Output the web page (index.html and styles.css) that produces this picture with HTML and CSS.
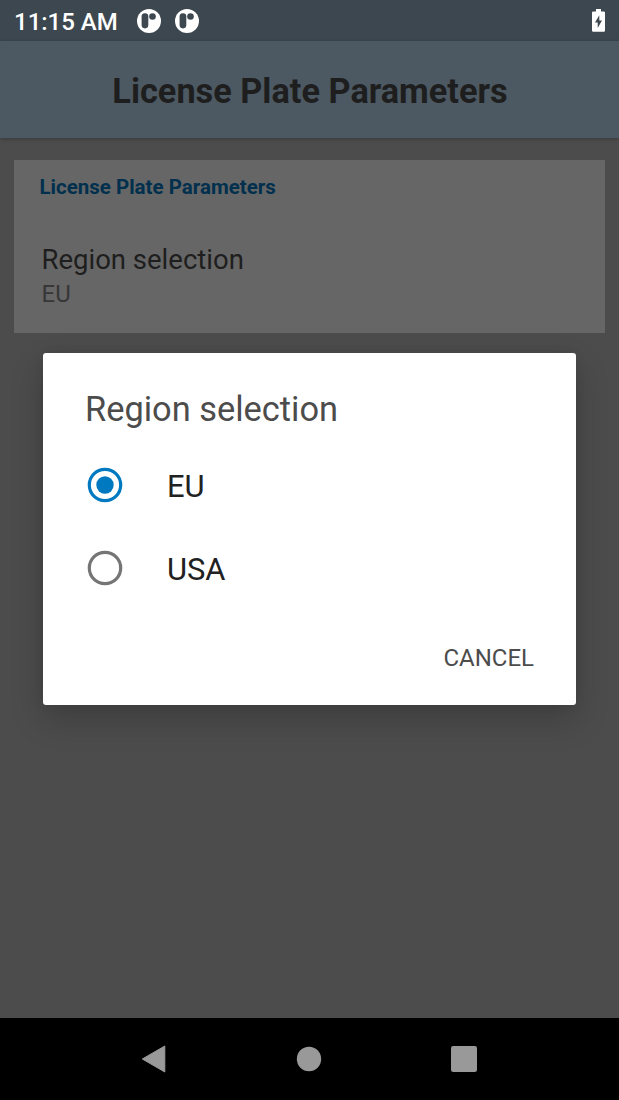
FILE: index.html
```html
<!DOCTYPE html>
<html lang="en">
<head>
<meta charset="utf-8">
<title>License Plate Parameters</title>
<link rel="stylesheet" href="styles.css">
</head>
<body>
<div class="screen">
  <div class="status-bar">
    <span class="clock">11:15 AM</span>
    <svg class="notice" width="24" height="24" viewBox="0 0 24 24"><circle cx="12" cy="12" r="12" fill="#fff"/><rect x="4.600" y="4.200" width="6.700" height="15.200" rx="3.300" fill="#3d474f"/><circle cx="15.500" cy="7.500" r="3.300" fill="#3d474f"/></svg>
    <svg class="notice" width="24" height="24" viewBox="0 0 24 24"><circle cx="12" cy="12" r="12" fill="#fff"/><rect x="4.600" y="4.200" width="6.700" height="15.200" rx="3.300" fill="#3d474f"/><circle cx="15.500" cy="7.500" r="3.300" fill="#3d474f"/></svg>
    <svg class="battery" width="13" height="23" viewBox="0 0 13 23"><path d="M4 0h5v2.400h2.800q1.200 0 1.200 1.200v18q0 1.200-1.200 1.200H1.200Q0 22.800 0 21.600v-18Q0 2.400 1.200 2.400H4z" fill="#fff"/><path d="M7.300 6.200v5.300h2.700L5.700 19v-5.600H3z" fill="#3d474f"/></svg>
  </div>
  <header class="app-bar"><h1 class="app-title">License Plate Parameters</h1></header>
  <main class="content">
    <section class="card">
      <h2 class="card-heading">License Plate Parameters</h2>
      <div class="pref-title">Region selection</div>
      <div class="pref-value">EU</div>
    </section>
  </main>
  <nav class="nav-bar">
    <svg class="nav-icon" width="30" height="30" viewBox="0 0 30 30"><path d="M2.300 15 24.800 2v26z" fill="#999" stroke="#999" stroke-linejoin="round"/></svg>
    <svg class="nav-icon" width="30" height="30" viewBox="0 0 30 30"><circle cx="15" cy="15" r="12.200" fill="#999"/></svg>
    <svg class="nav-icon" width="30" height="30" viewBox="0 0 30 30"><rect x="2" y="2" width="26" height="26" rx="2.200" fill="#999"/></svg>
  </nav>
  <div class="dialog" role="dialog">
    <div class="dialog-title">Region selection</div>
    <div class="option">
      <svg width="36" height="36" viewBox="0 0 36 36"><circle cx="18" cy="18" r="15.700" fill="none" stroke="#0079c1" stroke-width="3.200"/><circle cx="18" cy="18" r="8.700" fill="#0079c1"/></svg>
      <span class="option-label">EU</span>
    </div>
    <div class="option">
      <svg width="36" height="36" viewBox="0 0 36 36"><circle cx="18" cy="18" r="15.700" fill="none" stroke="#757575" stroke-width="3.200"/></svg>
      <span class="option-label">USA</span>
    </div>
    <div class="actions"><span class="cancel">CANCEL</span></div>
  </div>
</div>
</body>
</html>
```

FILE: styles.css
```css
* { box-sizing: border-box; }
body { margin: 0; font-family: Roboto, sans-serif; }
.screen {
  position: relative;
  width: 619px;
  height: 1100px;
  display: flex;
  flex-direction: column;
  overflow: hidden;
  background: #4c4c4c;
}
.status-bar {
  display: flex;
  align-items: center;
  height: 41px;
  padding: 0 14px;
  background: #3d474f;
  color: #fff;
}
.clock {
  width: 123px;
  padding-top: 3px;
  font-size: 24px;
  font-weight: 500;
  line-height: 40px;
  white-space: nowrap;
}
.notice { margin-right: 14px; }
.battery { margin-left: auto; }
.app-bar {
  display: flex;
  align-items: center;
  justify-content: center;
  height: 96.500px;
  padding: 3px 0 0 1px;
  background: #4c5963;
  box-shadow: 0 1px 4px rgba(0, 0, 0, .25);
}
.app-title {
  margin: 0;
  font-size: 34.300px;
  font-weight: 700;
  color: #1e1e1e;
  white-space: nowrap;
}
.content { flex: 1; padding: 22.500px 14px; }
.card {
  height: 173px;
  padding: 15px 27.500px 0;
  background: #666;
  color: #1e1e1e;
}
.card-heading {
  margin: 0 0 0 -2px;
  font-size: 20.500px;
  font-weight: 700;
  line-height: 24px;
  color: #00304d;
}
.pref-title { margin-top: 45px; font-size: 27.500px; line-height: 32px; }
.pref-value { margin-top: 4px; font-size: 24px; line-height: 28px; color: #373737; }
.nav-bar {
  display: flex;
  justify-content: center;
  align-items: center;
  gap: 124.500px;
  height: 82.500px;
  padding-right: 1px;
  background: #000;
}
.dialog {
  position: absolute;
  left: 43px;
  top: 353px;
  width: 533px;
  height: 352px;
  padding: 35px 42px 0;
  border-radius: 3px;
  background: #fff;
  box-shadow: 0 14px 34px rgba(0, 0, 0, .2), 0 0 12px rgba(0, 0, 0, .06);
}
.dialog-title { height: 56px; font-size: 34.400px; line-height: 42px; color: #4c4c4c; }
.option {
  display: flex;
  align-items: center;
  gap: 44px;
  height: 82.500px;
  padding-left: 2px;
}
.option-label { padding-top: 3.500px; font-size: 30.900px; line-height: 36px; color: #212121; }
.actions { display: flex; justify-content: flex-end; padding-top: 35px; }
.cancel { font-size: 24px; line-height: 28px; color: #4c4c4c; }
```
